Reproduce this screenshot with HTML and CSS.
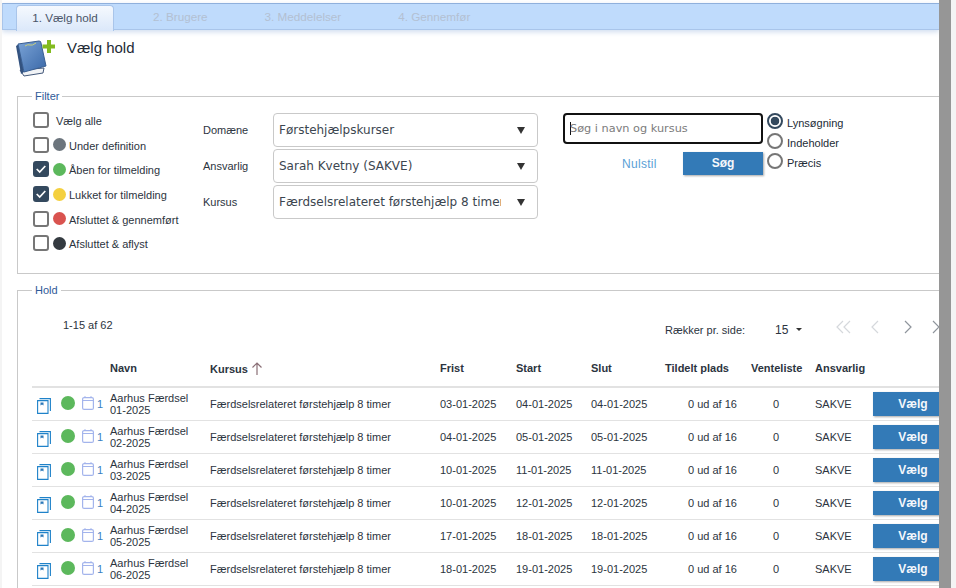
FILE: index.html
```html
<!DOCTYPE html>
<html lang="da">
<head>
    <meta charset="UTF-8">
    <meta name="viewport" content="width=device-width, initial-scale=1.0">
    <title>Vælg hold</title>
    <link rel="stylesheet" href="styles.css">
</head>
<body>
    <div class="page">
        <div class="main">
            <div class="tabs">
                <div class="tab active">1. Vælg hold</div>
                <div class="tab step2">2. Brugere</div>
                <div class="tab step3">3. Meddelelser</div>
                <div class="tab step4">4. Gennemfør</div>
            </div>

            <div class="title-row">
                <svg class="book" width="40" height="40" viewBox="0 0 40 40">
                    <defs>
                        <linearGradient id="bookFill" x1="0" y1="0" x2="1" y2="1">
                            <stop offset="0" stop-color="#7aa3d6"/>
                            <stop offset="1" stop-color="#3a68a8"/>
                        </linearGradient>
                    </defs>
                    <path d="M5 31 L9 37 L28 34 L29 29 Z" fill="#f1f3f6" stroke="#44597a"/>
                    <path d="M1 7 L4 5 L9 33 L6 35 Z" fill="#33527f"/>
                    <path d="M3 5 L24 2 Q26 2 26 4 L31 27 L9 33 Z" fill="url(#bookFill)" stroke="#3a5f92"/>
                    <path d="M10 7 Q13 5 15 6 T21 4" fill="none" stroke="#c9cf7a" stroke-width="1"/>
                    <path d="M32 1 H36 V5.500 H40 V9.500 H36 V14 H32 V9.500 H27.500 V5.500 H32 Z" fill="#83bb1f"/>
                </svg>
                <h1>Vælg hold</h1>
            </div>

            <fieldset class="box filter">
                <legend>Filter</legend>
                <div class="filter-grid">
                    <div class="checks">
                        <label class="check"><span class="cb"></span><span class="check-text first">Vælg alle</span></label>
                        <label class="check"><span class="cb"></span><span class="dot grey"></span><span class="check-text">Under definition</span></label>
                        <label class="check"><span class="cb on"><svg width="14" height="12" viewBox="0 0 14 12"><path d="M2 6 L5.500 9.500 L12 2.500" fill="none" stroke="#fff" stroke-width="2"/></svg></span><span class="dot green"></span><span class="check-text">Åben for tilmelding</span></label>
                        <label class="check"><span class="cb on"><svg width="14" height="12" viewBox="0 0 14 12"><path d="M2 6 L5.500 9.500 L12 2.500" fill="none" stroke="#fff" stroke-width="2"/></svg></span><span class="dot yellow"></span><span class="check-text">Lukket for tilmelding</span></label>
                        <label class="check"><span class="cb"></span><span class="dot red"></span><span class="check-text">Afsluttet &amp; gennemført</span></label>
                        <label class="check"><span class="cb"></span><span class="dot dark"></span><span class="check-text">Afsluttet &amp; aflyst</span></label>
                    </div>

                    <div class="selects">
                        <div class="select-row">
                            <span class="select-label">Domæne</span>
                            <div class="select"><span class="select-value">Førstehjælpskurser</span><span class="arrow"></span></div>
                        </div>
                        <div class="select-row">
                            <span class="select-label">Ansvarlig</span>
                            <div class="select"><span class="select-value">Sarah Kvetny (SAKVE)</span><span class="arrow"></span></div>
                        </div>
                        <div class="select-row">
                            <span class="select-label">Kursus</span>
                            <div class="select"><span class="select-value">Færdselsrelateret førstehjælp 8 timer</span><span class="arrow"></span></div>
                        </div>
                    </div>

                    <div class="search">
                        <div class="search-input"><span class="caret"></span>Søg i navn og kursus</div>
                        <div class="search-actions">
                            <span class="reset">Nulstil</span>
                            <span class="btn search-btn">Søg</span>
                        </div>
                    </div>

                    <div class="radios">
                        <label class="radio"><span class="rb on"></span><span class="radio-text">Lynsøgning</span></label>
                        <label class="radio"><span class="rb"></span><span class="radio-text">Indeholder</span></label>
                        <label class="radio"><span class="rb"></span><span class="radio-text">Præcis</span></label>
                    </div>
                </div>
            </fieldset>

            <fieldset class="box hold">
                <legend>Hold</legend>
                <div class="pager">
                    <span class="count">1-15 af 62</span>
                    <span class="per-page">Rækker pr. side:</span>
                    <span class="per-value">15</span>
                    <span class="per-arrow"></span>
                    <div class="pager-icons">
                        <svg width="20" height="14" viewBox="0 0 20 14"><path d="M8 1 L2 7 L8 13 M15 1 L9 7 L15 13" fill="none" stroke="#d5d8dc" stroke-width="1.2"/></svg>
                        <svg class="prev" width="10" height="14" viewBox="0 0 10 14"><path d="M8 1 L2 7 L8 13" fill="none" stroke="#d5d8dc" stroke-width="1.2"/></svg>
                        <svg class="next" width="10" height="14" viewBox="0 0 10 14"><path d="M2 1 L8 7 L2 13" fill="none" stroke="#8f959c" stroke-width="1.2"/></svg>
                        <svg class="last" width="10" height="14" viewBox="0 0 10 14"><path d="M2 1 L8 7 L2 13" fill="none" stroke="#8f959c" stroke-width="1.2"/></svg>
                    </div>
                </div>

                <table class="holds">
                    <thead>
                        <tr>
                            <th class="col-icons"></th>
                            <th class="col-name">Navn</th>
                            <th class="col-course">Kursus <svg class="sort" width="12" height="13" viewBox="0 0 12 13"><path d="M6 13 V1 M1.500 5.500 L6 1 L10.500 5.500" fill="none" stroke="#8a6f76" stroke-width="1.2"/></svg></th>
                            <th class="col-date">Frist</th>
                            <th class="col-date2">Start</th>
                            <th class="col-date3">Slut</th>
                            <th class="col-seats">Tildelt plads</th>
                            <th class="col-wait">Venteliste</th>
                            <th class="col-owner">Ansvarlig</th>
                            <th class="col-btn"></th>
                        </tr>
                    </thead>
                    <tbody id="rows"></tbody>
                </table>
            </fieldset>
        </div>
        <div class="scrollbar"></div>
    </div>

    <script>
        // raekkerne i tabellen
        var hold = [
            ['01-2025', '03-01-2025', '04-01-2025', '04-01-2025'],
            ['02-2025', '04-01-2025', '05-01-2025', '05-01-2025'],
            ['03-2025', '10-01-2025', '11-01-2025', '11-01-2025'],
            ['04-2025', '10-01-2025', '12-01-2025', '12-01-2025'],
            ['05-2025', '17-01-2025', '18-01-2025', '18-01-2025'],
            ['06-2025', '18-01-2025', '19-01-2025', '19-01-2025']
        ];

        document.getElementById('rows').innerHTML = hold.map(function (h) {
            return `
                <tr>
                    <td class="icons">
                        <div class="icon-wrap">
                            <svg class="doc" width="14" height="16" viewBox="0 0 14 16"><path d="M.6 2.600 H11 V15.400 H.6 Z M2.500 .6 H13.400 V13" fill="none" stroke="#1f82c9" stroke-width="1.100"/><path d="M3.500 4.500 H6.500 V7.500 L5 6.600 L3.500 7.500 Z" fill="#2a78b8"/></svg>
                            <span class="dot green"></span>
                            <svg class="cal" width="12" height="14" viewBox="0 0 12 14"><rect x=".6" y="1.600" width="10.800" height="11.800" rx="1.500" fill="none" stroke="#a3b4ec" stroke-width="1.200"/><path d="M.5 4.500 H11.500 M3 .3 V1.500 M9 .3 V1.500" fill="none" stroke="#a3b4ec" stroke-width="1.200"/></svg>
                            <span class="cal-num">1</span>
                        </div>
                    </td>
                    <td>Aarhus Færdsel<br>${h[0]}</td>
                    <td>Færdselsrelateret førstehjælp 8 timer</td>
                    <td>${h[1]}</td>
                    <td>${h[2]}</td>
                    <td>${h[3]}</td>
                    <td class="seats">0 ud af 16</td>
                    <td class="wait">0</td>
                    <td>SAKVE</td>
                    <td class="action"><span class="btn pick">Vælg</span></td>
                </tr>
            `;
        }).join('');
    </script>
</body>
</html>
```

FILE: styles.css
```css
* {
    box-sizing: border-box;
}

html, body {
    margin: 0;
    padding: 0;
    height: 100%;
    overflow: hidden;
    background: #f4f4f4;
}

body {
    font-family: 'Liberation Sans', Arial, sans-serif;
    font-size: 11px;
    color: #2c3440;
}

.page {
    display: flex;
    height: 588px;
    width: 956px;
}

.main {
    width: 937px;
    margin-left: 2px;
    flex: none;
    overflow: hidden;
    background: white;
}

.scrollbar {
    width: 12px;
    flex: none;
    background: #969696;
}

/* faner */
.tabs {
    display: flex;
    height: 27px;
    margin-top: 3px;
    padding-left: 13px;
    background: #bfdbfc;
    border-top: 1px solid #8fb0dc;
    border-left: 1px solid #a9c5ea;
    border-bottom: 1px solid #a9c5ea;
    box-shadow: 0 2px 5px rgba(150, 180, 220, 0.45);
}

.tab {
    font-size: 11.7px;
    line-height: 26px;
    color: #b3c0d2;
    white-space: nowrap;
}

.tab.active {
    width: 98px;
    height: 26px;
    text-align: center;
    color: #4a5568;
    background: linear-gradient(#f5f9fe, #dbe8fa);
    border: 1px solid #a9c5ea;
    border-bottom: none;
    border-radius: 4px 4px 0 0;
    margin-top: 1px;
    line-height: 24px;
}

.step2 { margin-left: 39px; }
.step3 { margin-left: 57px; }
.step4 { margin-left: 57px; }

.title-row {
    display: flex;
    height: 55px;
    padding: 6px 0 0 13px;
}

.book {
    flex: none;
    margin-top: 3px;
}

h1 {
    margin: 4px 0 0 12px;
    font-size: 15px;
    font-weight: normal;
    line-height: 16px;
    color: #222b36;
}

/* bokse */
.box {
    margin: 0 0 0 15px;
    padding: 0;
    min-width: 0;
    border: 1px solid #c9c9c9;
    border-right: none;
}

.box legend {
    margin-left: 14px;
    padding: 0 3px;
    font-size: 11px;
    color: #2f5a98;
}

.filter {
    height: 184px;
    margin-top: 5px;
}

.filter-grid {
    display: flex;
    padding-top: 6px;
}

.checks {
    width: 185px;
    padding-left: 15px;
    flex: none;
}

.check {
    display: flex;
    align-items: center;
    height: 24.6px;
}

.cb {
    display: flex;
    align-items: center;
    justify-content: center;
    width: 16px;
    height: 16px;
    flex: none;
    border: 2px solid #767676;
    border-radius: 3px;
    background: white;
}

.cb.on {
    background: #34495e;
    border-color: #34495e;
}

.dot {
    display: block;
    width: 13px;
    height: 13px;
    flex: none;
    border-radius: 50%;
    margin-left: 4px;
}

.grey { background: #6c757d; }
.green { background: #5cb85c; }
.yellow { background: #f4d03f; }
.red { background: #d9534f; }
.dark { background: #343a40; }

.check-text {
    margin-left: 3px;
    padding-top: 2px;
    white-space: nowrap;
}

.check-text.first {
    margin-left: 7px;
}

.selects {
    width: 335px;
    flex: none;
    padding-top: 4px;
}

.select-row {
    display: flex;
    align-items: center;
    height: 36px;
}

.select-label {
    width: 70px;
    flex: none;
}

.select {
    display: flex;
    align-items: center;
    width: 265px;
    height: 34px;
    padding: 0 12px 0 5px;
    border: 1px solid #c9c9c9;
    border-radius: 4px;
    font-family: 'DejaVu Sans', sans-serif;
    font-size: 12px;
    color: #3c4650;
}

.select-value {
    flex: 1;
    overflow: hidden;
    white-space: nowrap;
    max-width: 222px;
}

.arrow {
    width: 0;
    height: 0;
    margin-left: auto;
    border-left: 4px solid transparent;
    border-right: 4px solid transparent;
    border-top: 7px solid #333;
}

.search {
    width: 202px;
    flex: none;
    margin-left: 25px;
}

.search-input {
    display: flex;
    align-items: center;
    width: 200px;
    height: 31px;
    padding-left: 5px;
    margin-top: 5px;
    border: 2px solid #111;
    border-radius: 4px;
    font-family: 'DejaVu Sans', sans-serif;
    font-size: 11.3px;
    color: #7c7c7c;
    white-space: nowrap;
}

.caret {
    width: 1px;
    height: 13px;
    background: #111;
    margin-right: -1px;
}

.search-actions {
    display: flex;
    align-items: center;
    margin-top: 8px;
}

.reset {
    margin-left: 59px;
    width: 61px;
    color: #5a9fd6;
    font-size: 12px;
    letter-spacing: .3px;
}

.btn {
    display: block;
    text-align: center;
    font-weight: bold;
    color: #f4f7fb;
    background: #337ab7;
    box-shadow: 1px 1px 2px rgba(0, 0, 0, 0.35);
}

.search-btn {
    width: 80px;
    height: 23px;
    line-height: 23px;
    font-size: 12px;
}

.radios {
    margin-left: 2px;
    padding-top: 4px;
}

.radio {
    display: flex;
    align-items: center;
    height: 20px;
    color: #222b36;
}

.radio-text {
    padding-top: 2px;
}

.rb {
    width: 16px;
    height: 16px;
    margin-right: 4px;
    margin-top: -2px;
    border: 2px solid #767676;
    border-radius: 50%;
    flex: none;
}

.rb.on {
    border-color: #34495e;
    background: radial-gradient(circle, #34495e 0 4px, white 4.6px);
}

/* hold */
.hold {
    margin-top: 10px;
    height: 320px;
}

.pager {
    display: flex;
    align-items: center;
    height: 48px;
    padding-top: 19px;
}

.count {
    margin-left: 45px;
    width: 602px;
    flex: none;
    margin-top: -10px;
}

.per-page {
    width: 110px;
    flex: none;
}

.per-value {
    width: 21px;
    flex: none;
    font-size: 12px;
}

.per-arrow {
    width: 0;
    height: 0;
    border-left: 3px solid transparent;
    border-right: 3px solid transparent;
    border-top: 3px solid #333;
}

.pager-icons {
    display: flex;
    align-items: center;
    margin-left: 33px;
    margin-top: -6px;
}

.prev { margin-left: 15px; }
.next { margin-left: 23px; }
.last { margin-left: 18px; }

.holds {
    border-collapse: collapse;
    table-layout: fixed;
    width: 921px;
    margin: 6px 0 0 14px;
}

.holds th {
    height: 37px;
    padding: 0 0 0 1px;
    text-align: left;
    font-size: 11px;
    border-bottom: 2px solid #e2e2e2;
    color: #2c3440;
    white-space: nowrap;
    vertical-align: middle;
}

.holds td {
    height: 33px;
    padding: 0 0 0 1px;
    border-bottom: 1px solid #e2e2e2;
    line-height: 12px;
    white-space: nowrap;
}

.col-icons { width: 77px; }
.col-name { width: 100px; }
.col-course { width: 230px; }
.col-date { width: 76px; }
.col-date2 { width: 75px; }
.col-date3 { width: 74px; }
.col-seats { width: 86px; }
.col-wait { width: 64px; }
.col-owner { width: 58px; }

.sort {
    vertical-align: -2px;
}

.icon-wrap {
    display: flex;
    align-items: center;
    padding-left: 4px;
}

.doc {
    margin-top: 5px;
}

.icon-wrap .dot {
    width: 14px;
    height: 14px;
    margin-left: 10px;
    margin-top: -1px;
}

.cal {
    margin-left: 7px;
    margin-top: -1px;
}

.cal-num {
    margin-left: 3px;
    color: #3a7fc2;
}

td.seats {
    padding-left: 24px;
}

td.wait {
    padding-left: 23px;
}

.pick {
    width: 80px;
    height: 24px;
    line-height: 24px;
    font-size: 12px;
}
```
